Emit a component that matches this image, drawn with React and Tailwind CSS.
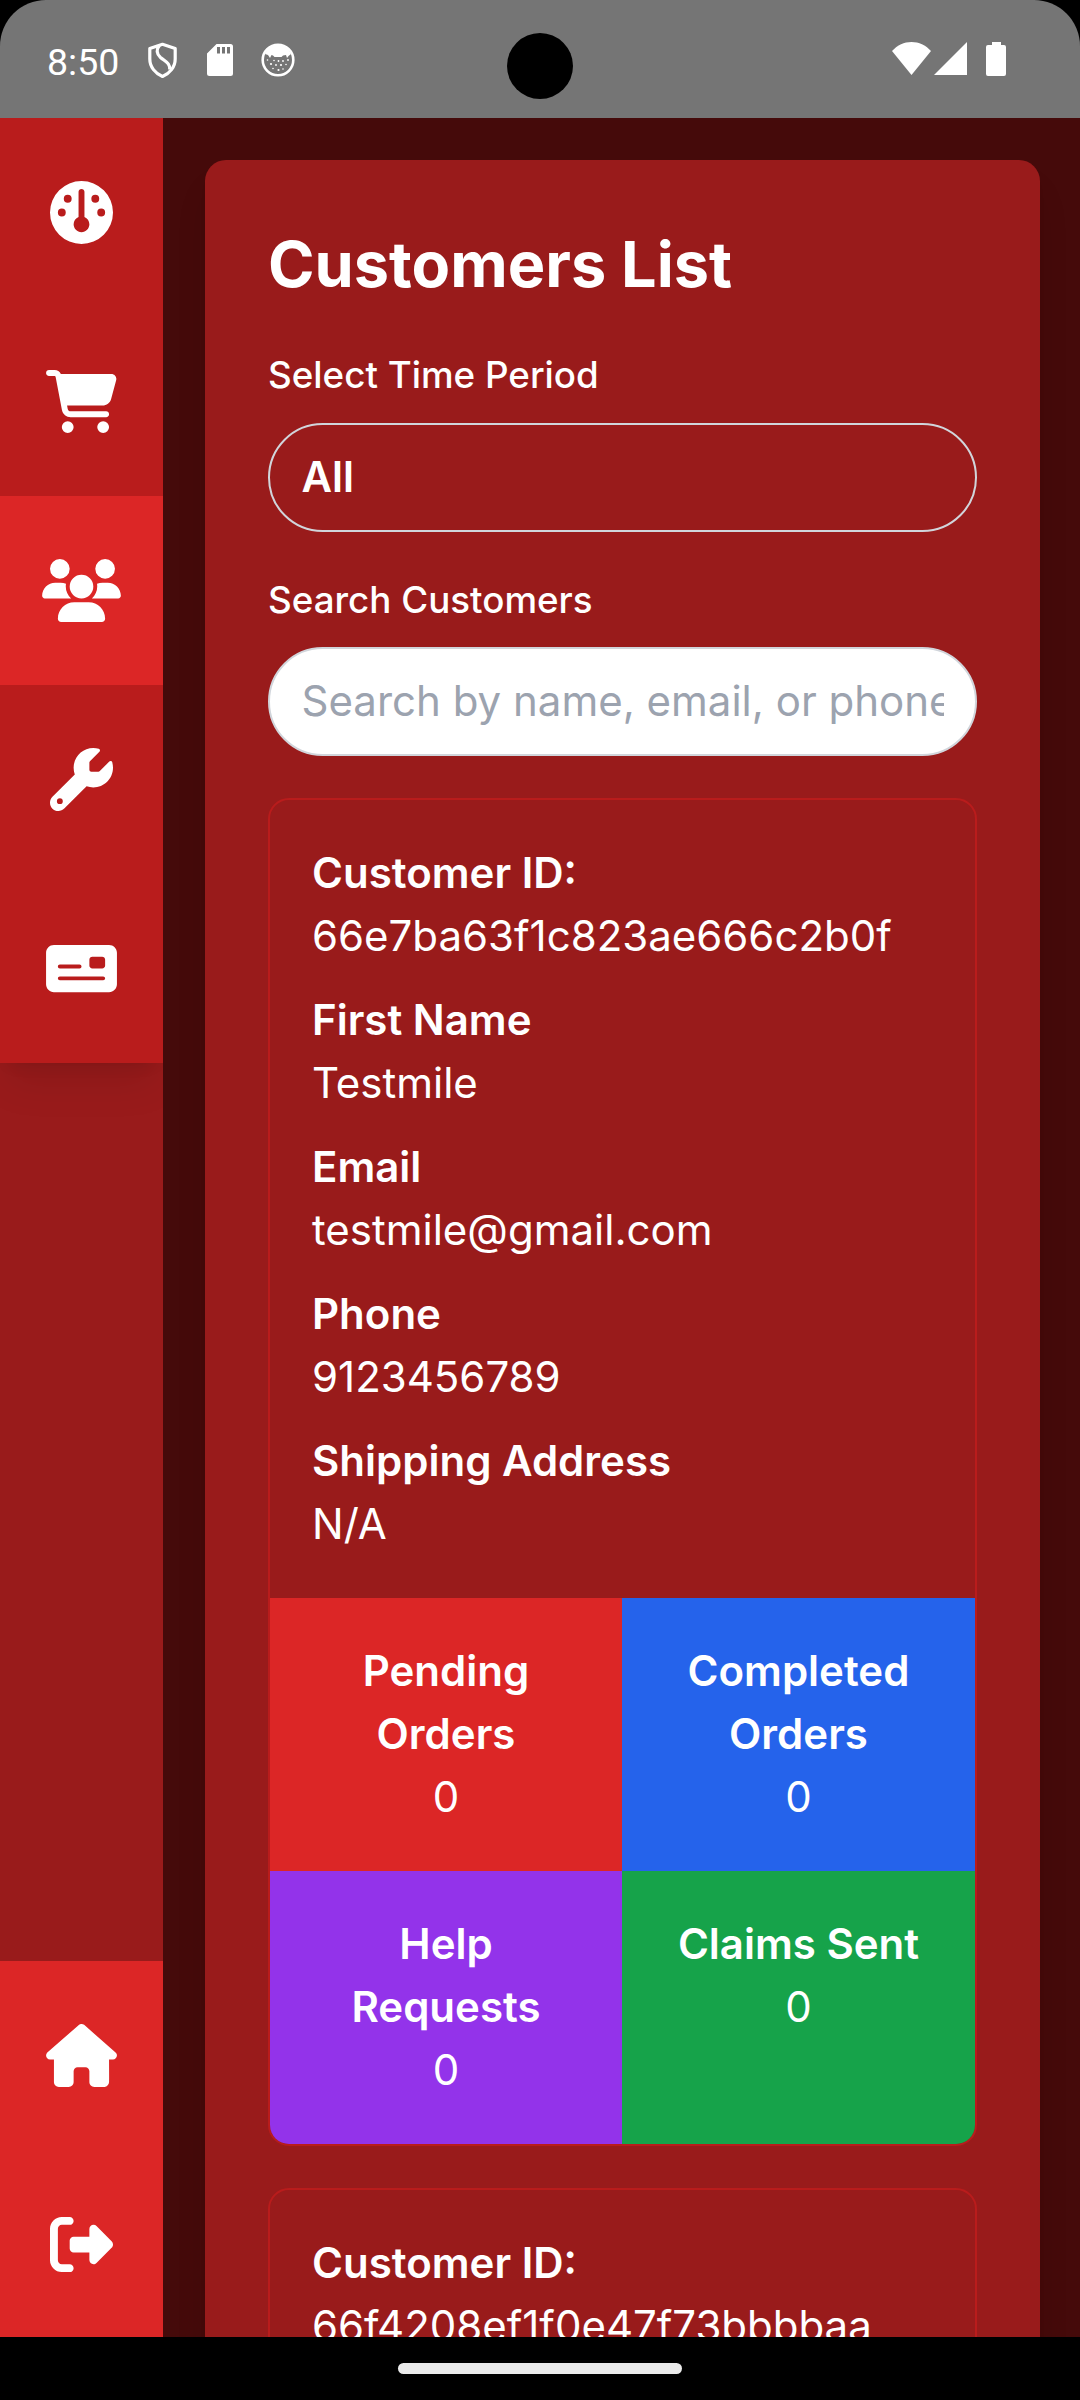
import React from "react";
import {
  FaGauge,
  FaCartShopping,
  FaUsers,
  FaWrench,
  FaMoneyCheck,
  FaHouse,
  FaRightFromBracket,
} from "react-icons/fa6";

const navTop = [
  { name: "Dashboard", Icon: FaGauge, size: "h-[63px] w-[63px]" },
  { name: "Orders", Icon: FaCartShopping, size: "h-[63px] w-[71px]" },
  { name: "Customers", Icon: FaUsers, size: "h-[63px] w-[79px]", active: true },
  { name: "Support", Icon: FaWrench, size: "h-[63px] w-[63px]" },
  { name: "Claims", Icon: FaMoneyCheck, size: "h-[63px] w-[71px]" },
];

const navBottom = [
  { name: "Home", Icon: FaHouse, size: "h-[63px] w-[71px]" },
  { name: "Log out", Icon: FaRightFromBracket, size: "h-[63px] w-[63px]" },
];

const customers = [
  {
    fields: [
      ["Customer ID:", "66e7ba63f1c823ae666c2b0f"],
      ["First Name", "Testmile"],
      ["Email", "testmile@gmail.com"],
      ["Phone", "9123456789"],
      ["Shipping Address", "N/A"],
    ],
    stats: { pending: 0, completed: 0, help: 0, claims: 0 },
  },
  {
    fields: [["Customer ID:", "66f4208ef1f0e47f73bbbbaa"]],
  },
];

function StatusBar() {
  return (
    <div className="h-[118px] shrink-0 bg-black">
      <div className="relative flex h-full items-start justify-between rounded-t-[46px] bg-[#757575] text-white">
        <div className="flex items-start">
          <span className="ml-[47px] mt-[40px] w-[88px] whitespace-nowrap font-['Roboto'] text-[37.5px] leading-[44px]">8:50</span>
          <svg className="ml-[12px] mt-[42px] h-[37px] w-[31px]" viewBox="0 0 31 37" fill="none" stroke="currentColor" strokeWidth="3.2" strokeLinejoin="round">
            <path d="M15.500 2.300 28.200 6.500V17c0 8-5.500 14.500-12.700 17.500C8.300 31.500 2.800 25 2.800 17V6.500z" />
            <path d="M12.500 3.500C9 7.500 9.500 12 13.500 15.500c5.500 4.500 9.500 5.500 9.200 12" />
          </svg>
          <svg className="ml-[29px] mt-[44px] h-[32px] w-[26px]" viewBox="0 0 26 32" fill="currentColor">
            <path fillRule="evenodd" d="M9.500 0H23.500a2.500 2.500 0 0 1 2.500 2.500v27a2.500 2.500 0 0 1-2.500 2.500H2.500a2.500 2.500 0 0 1-2.500-2.500V9.500zM10 3v6.500h3V3zm5 0v6.500h3V3zm5 0v6.500h3V3z" />
          </svg>
          <svg className="ml-[28px] mt-[43px] h-[34px] w-[34px]" viewBox="0 0 34 34" fill="currentColor">
            <circle cx="17" cy="17" r="15.300" fill="none" stroke="currentColor" strokeWidth="2.600" />
            <path d="M4 11C7 4 12 1.500 17 1.500S27 4 30 11l-2.500 2-1.500 2-1-3-3 .500L20.500 14h-7L12 12.500 10.500 12l-1.500 3-2-3z" />
            <g>
              <circle cx="10" cy="21" r="1.100" /><circle cx="13" cy="17.500" r=".8" /><circle cx="17.500" cy="18" r=".9" />
              <circle cx="22" cy="18" r=".9" /><circle cx="27" cy="17" r=".9" /><circle cx="6.500" cy="17" r=".8" />
              <circle cx="15" cy="22" r=".9" /><circle cx="20" cy="22" r="1.100" /><circle cx="25" cy="21.500" r=".8" />
              <circle cx="12" cy="25.500" r=".8" /><circle cx="17.500" cy="27" r="1.100" /><circle cx="22" cy="26" r=".8" />
            </g>
          </svg>
        </div>
        <div className="mr-[74px] mt-[42px] flex items-start">
          <svg className="h-[33px] w-[39px]" viewBox="0 0 39 33" fill="currentColor">
            <path d="M0 9C5.500 3 12 0 19.500 0S33.500 3 39 9L19.500 33z" />
          </svg>
          <svg className="ml-[3px] h-[33px] w-[33px]" viewBox="0 0 33 33" fill="currentColor">
            <path d="M33 0v33H0z" />
          </svg>
          <svg className="ml-[19px] h-[34px] w-[20px]" viewBox="0 0 20 34" fill="currentColor">
            <path d="M6 0h9v3h3a2 2 0 0 1 2 2v27a2 2 0 0 1-2 2H2a2 2 0 0 1-2-2V5a2 2 0 0 1 2-2h4z" />
          </svg>
        </div>
        <div className="absolute left-1/2 top-[33px] size-[66px] -translate-x-1/2 rounded-full bg-black" />
      </div>
    </div>
  );
}

function NavItem({ name, Icon, size, active }) {
  return (
    <a
      aria-label={name}
      className={
        active
          ? "flex h-[189px] shrink-0 items-center justify-center bg-[#dc2626]"
          : "flex h-[189px] shrink-0 items-center justify-center"
      }
    >
      <Icon className={size} />
    </a>
  );
}

function Sidebar() {
  return (
    <nav className="flex w-[163px] shrink-0 flex-col justify-between bg-[#991b1b]">
      <div className="bg-[#b91c1c] shadow-[0_26px_39px_-8px_rgba(0,0,0,0.1),0_10px_16px_-10px_rgba(0,0,0,0.1)]">
        {navTop.map((item) => (
          <NavItem key={item.name} {...item} />
        ))}
      </div>
      <div className="flex h-[376px] flex-col overflow-hidden bg-[#dc2626]">
        {navBottom.map((item) => (
          <NavItem key={item.name} {...item} />
        ))}
      </div>
    </nav>
  );
}

function Stat({ label, value, color }) {
  return (
    <div className={color}>
      <div className="px-[42px] pb-[43px] pt-[41px]">
        <p className="font-semibold">{label}</p>
        <p>{value}</p>
      </div>
    </div>
  );
}

function CustomerCard({ fields, stats }) {
  return (
    <article className="min-h-[300px] shrink-0 overflow-hidden rounded-[21px] border-2 border-[#b91c1c] text-[42px] leading-[63px]">
      <div className="flex flex-col gap-[21px] px-[42px] pb-[43px] pt-[41px]">
        {fields.map(([label, value]) => (
          <div key={label}>
            <p className="font-semibold">{label}</p>
            <p>{value}</p>
          </div>
        ))}
      </div>
      {stats && (
        <div className="grid grid-cols-[352px_1fr] text-center">
          <Stat label="Pending Orders" value={stats.pending} color="bg-[#dc2626]" />
          <Stat label="Completed Orders" value={stats.completed} color="bg-[#2563eb]" />
          <Stat label="Help Requests" value={stats.help} color="bg-[#9333ea]" />
          <Stat label="Claims Sent" value={stats.claims} color="bg-[#16a34a]" />
        </div>
      )}
    </article>
  );
}

export default function App() {
  return (
    <div className="flex h-[2400px] w-[1080px] flex-col overflow-hidden bg-black font-['Inter',sans-serif] text-white">
      <StatusBar />
      <div className="flex h-[2219px] shrink-0 overflow-hidden">
        <Sidebar />
        <main className="h-full flex-1 overflow-hidden bg-[#450a0a] pl-[42px] pr-[40px] pt-[42px]">
          <section className="flex flex-col rounded-[21px] bg-[#991b1b] p-[63px] shadow-[0_26px_39px_-8px_rgba(0,0,0,0.1),0_10px_16px_-10px_rgba(0,0,0,0.1)]">
            <h1 className="mb-[44px] text-[63px] font-bold leading-[82px]">Customers List</h1>
            <label className="mb-[23px] text-[36.75px] font-medium leading-[51px]">Select Time Period</label>
            <div className="mb-[42px] flex h-[109px] items-center rounded-full border-2 border-[#d1d5db] px-[31.5px] pb-[2px] text-[42px] font-semibold">
              All
            </div>
            <label className="mb-[21px] text-[36.75px] font-medium leading-[52px]">Search Customers</label>
            <input
              className="mb-[42px] h-[109px] w-full rounded-full border-2 border-[#d1d5db] bg-white px-[31.5px] pb-[2px] text-[42px] text-gray-900 placeholder:text-[#9ca3af]"
              placeholder="Search by name, email, or phone"
            />
            <div className="flex flex-col gap-[42px]">
              {customers.map((customer) => (
                <CustomerCard key={customer.fields[0][1]} {...customer} />
              ))}
            </div>
          </section>
        </main>
      </div>
      <div className="flex flex-1 justify-center bg-black pt-[26px]">
        <div className="h-[11px] w-[284px] rounded-full bg-[#ebebeb]" />
      </div>
    </div>
  );
}
